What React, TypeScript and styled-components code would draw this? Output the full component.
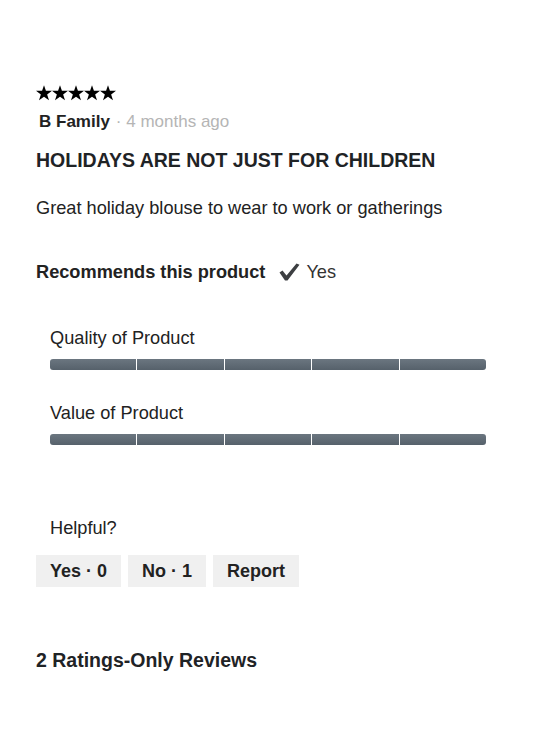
import React from "react";
import styled, { createGlobalStyle } from "styled-components";

const Global = createGlobalStyle`
  html, body { margin: 0; padding: 0; background: #fff; }
  body { font-family: "Liberation Sans", Arial, sans-serif; color: #1f2326; }
`;

const Page = styled.div`
  padding: 85px 36px 0 36px;
  display: flex;
  flex-direction: column;
`;

const Stars = styled.div`
  display: flex;
  height: 16px;
`;

const Meta = styled.div`
  margin-top: 11px;
  display: flex;
  align-items: baseline;
  font-size: 17px;
  line-height: 20px;
  padding-left: 3px;
`;

const Author = styled.span`
  font-weight: 700;
  color: #222;
`;

const Ago = styled.span`
  color: #b5b5b5;
  margin-left: 6px;
`;

const Title = styled.h2`
  margin: 17px 0 0 0;
  font-size: 19.5px;
  line-height: 22px;
  font-weight: 700;
  color: #1f2326;
`;

const Body = styled.p`
  margin: 26px 0 0 0;
  font-size: 18.2px;
  line-height: 22px;
  color: #222;
`;

const Recommend = styled.div`
  margin-top: 42px;
  display: flex;
  align-items: center;
  font-size: 18.2px;
  line-height: 22px;
`;

const RecLabel = styled.span`
  font-weight: 700;
  color: #222;
`;

const RecValue = styled.span`
  display: flex;
  align-items: center;
  margin-left: 14px;
  color: #333;
  gap: 6px;
`;

const Ratings = styled.div`
  margin-top: 45px;
  padding-left: 14px;
  padding-right: 28px;
  display: flex;
  flex-direction: column;
  gap: 33px;
`;

const RatingRow = styled.div`
  display: flex;
  flex-direction: column;
`;

const RatingLabel = styled.div`
  font-size: 18.2px;
  line-height: 20px;
  color: #222;
`;

const Bar = styled.div`
  margin-top: 11px;
  display: grid;
  grid-template-columns: repeat(5, 1fr);
  gap: 1px;
  height: 11px;
`;

const Segment = styled.div<{ $pos: "first" | "mid" | "last" }>`
  background: linear-gradient(#6b7680, #56616b);
  border-radius: ${(p) =>
    p.$pos === "first" ? "3px 0 0 3px" : p.$pos === "last" ? "0 3px 3px 0" : "0"};
`;

const Helpful = styled.div`
  margin-top: 73px;
  padding-left: 14px;
  font-size: 18.2px;
  line-height: 20px;
  color: #222;
`;

const Buttons = styled.div`
  margin-top: 17px;
  display: flex;
  gap: 7px;
`;

const Btn = styled.button`
  height: 32px;
  padding: 0 14px;
  border: none;
  background: #f0f0f0;
  font-family: "Liberation Sans", Arial, sans-serif;
  font-size: 18px;
  font-weight: 700;
  color: #222;
  cursor: pointer;
`;

const Footer = styled.h3`
  margin: 61px 0 0 0;
  font-size: 19.5px;
  line-height: 24px;
  font-weight: 700;
  color: #1f2326;
`;

const Star = () => (
  <svg width="16" height="16" viewBox="0 0 24 23">
    <path
      d="M12 0l2.9 8.3H24l-7.3 5.4 2.8 8.8L12 17.1l-7.5 5.4 2.8-8.8L0 8.3h9.1z"
      fill="#000"
    />
  </svg>
);

const Check = () => (
  <svg width="21" height="18" viewBox="0 0 21 18">
    <path
      d="M0.5 9.5 L3.5 7.5 L7.5 12.5 L17.5 0.5 L20.5 1.8 L8.5 17.5 L6 17.5 Z"
      fill="#3d3f42"
    />
  </svg>
);

const ratings = ["Quality of Product", "Value of Product"];

export default function App() {
  return (
    <>
      <Global />
      <Page>
        <Stars>
          {[0, 1, 2, 3, 4].map((i) => (
            <Star key={i} />
          ))}
        </Stars>
        <Meta>
          <Author>B Family</Author>
          <Ago>· 4 months ago</Ago>
        </Meta>
        <Title>HOLIDAYS ARE NOT JUST FOR CHILDREN</Title>
        <Body>Great holiday blouse to wear to work or gatherings</Body>
        <Recommend>
          <RecLabel>Recommends this product</RecLabel>
          <RecValue>
            <Check />
            Yes
          </RecValue>
        </Recommend>
        <Ratings>
          {ratings.map((r) => (
            <RatingRow key={r}>
              <RatingLabel>{r}</RatingLabel>
              <Bar>
                {[0, 1, 2, 3, 4].map((i) => (
                  <Segment key={i} $pos={i === 0 ? "first" : i === 4 ? "last" : "mid"} />
                ))}
              </Bar>
            </RatingRow>
          ))}
        </Ratings>
        <Helpful>Helpful?</Helpful>
        <Buttons>
          <Btn>Yes · 0</Btn>
          <Btn>No · 1</Btn>
          <Btn>Report</Btn>
        </Buttons>
        <Footer>2 Ratings-Only Reviews</Footer>
      </Page>
    </>
  );
}
